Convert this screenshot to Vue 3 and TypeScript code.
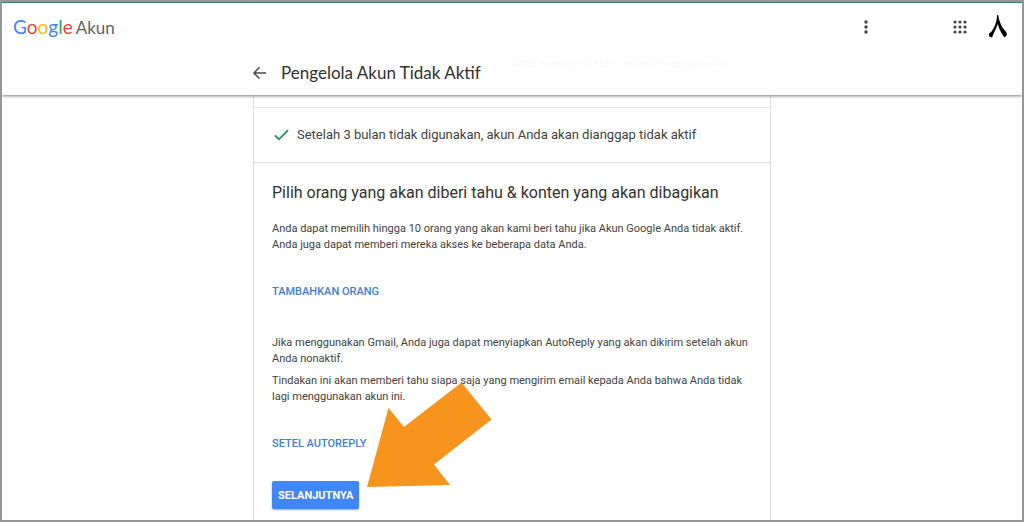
<script setup lang="ts">
interface Letter {
  char: string
  tone: string
}

const brand: Letter[] = [
  { char: 'G', tone: 'blue' },
  { char: 'o', tone: 'red' },
  { char: 'o', tone: 'yellow' },
  { char: 'g', tone: 'blue' },
  { char: 'l', tone: 'green' },
  { char: 'e', tone: 'red' },
]

const dots: number[] = [4, 9, 14]
</script>

<template>
  <div class="frame">
    <header class="header">
      <div class="topbar">
        <a href="#" class="logo" aria-label="Google Akun">
          <span class="google"><span v-for="(l, i) in brand" :key="i" :class="l.tone">{{ l.char }}</span></span>
          <span class="product">Akun</span>
        </a>
        <div class="tools">
          <button type="button" class="icon-button more" aria-label="Menu lainnya">
            <svg width="18" height="18" viewBox="0 0 18 18">
              <circle v-for="y in dots" :key="y" cx="9" :cy="y" r="1.7" />
            </svg>
          </button>
          <button type="button" class="icon-button apps" aria-label="Aplikasi Google">
            <svg width="18" height="18" viewBox="0 0 18 18">
              <template v-for="y in dots" :key="y">
                <circle v-for="x in dots" :key="x" :cx="x" :cy="y" r="1.6" />
              </template>
            </svg>
          </button>
          <button type="button" class="icon-button" aria-label="Profil">
            <svg class="avatar" width="20" height="26" viewBox="0 0 20 26">
              <path d="M9.2 1 L10.2 1 C10.8 6 12.8 11 15.2 14.6 C16.2 16.2 18.8 17.8 18.8 19.6 L18.6 21.8 L16.4 23.4 C14.6 20.6 11.2 16 9.7 10 C8.3 14.500 5.400 20 4 23.400 L1.200 22.600 L1 19.400 L3.400 17.800 C6.700 13.500 8.900 7.500 9.200 1 Z" />
            </svg>
          </button>
        </div>
      </div>
      <div class="titlebar">
        <button type="button" class="icon-button" aria-label="Kembali">
          <svg width="14" height="14" viewBox="0 0 14 14">
            <path class="stroke" d="M13 7 H1.500 M6.500 1.300 L1 7 L6.500 12.700" />
          </svg>
        </button>
        <h1>Pengelola Akun Tidak Aktif</h1>
      </div>
    </header>

    <main class="card">
      <section class="intro">
        <p>Anda meninggal atau berhenti menggunakan</p>
      </section>

      <section class="status">
        <svg width="15" height="12" viewBox="0 0 15 12">
          <path d="M1 6.4 L5 10.4 L14 1.2" />
        </svg>
        <p>Setelah 3 bulan tidak digunakan, akun Anda akan dianggap tidak aktif</p>
      </section>

      <section class="step">
        <h2>Pilih orang yang akan diberi tahu &amp; konten yang akan dibagikan</h2>
        <p>
          Anda dapat memilih hingga 10 orang yang akan kami beri tahu jika Akun Google Anda tidak aktif.
          Anda juga dapat memberi mereka akses ke beberapa data Anda.
        </p>
        <button type="button" class="text-button">TAMBAHKAN ORANG</button>
        <p>Jika menggunakan Gmail, Anda juga dapat menyiapkan AutoReply yang akan dikirim setelah akun Anda nonaktif.</p>
        <p class="follow">Tindakan ini akan memberi tahu siapa saja yang mengirim email kepada Anda bahwa Anda tidak lagi menggunakan akun ini.</p>
        <button type="button" class="text-button auto">SETEL AUTOREPLY</button>
        <div class="actions">
          <button type="button" class="primary">SELANJUTNYA</button>
          <svg class="pointer" width="126" height="107" viewBox="0 0 126 107">
            <path d="M0 105 L21.500 26 L37 45 L94.500 0.500 L124.500 37.500 L67 82.500 L83 103 Z" />
          </svg>
        </div>
      </section>
    </main>
  </div>
</template>

<style>
body {
  margin: 0;
  background: #fff;
}
</style>

<style scoped>
.frame {
  box-sizing: border-box;
  position: relative;
  height: 100vh;
  overflow: hidden;
  border: 2px solid #979797;
  background: #fff;
  color: #424242;
  font-family: Roboto, "Liberation Sans", sans-serif;
}
h1, h2, p {
  margin: 0;
  font-weight: 400;
}
button {
  border: 0;
  padding: 0;
  background: none;
  font-family: inherit;
  cursor: pointer;
}
.header {
  position: absolute;
  z-index: 1;
  top: 0;
  left: 0;
  right: 0;
  box-sizing: border-box;
  height: 93px;
  border-top: 1px solid #3d8078;
  background: rgba(255, 255, 255, 0.97);
  box-shadow: 0 1px 3px rgba(0, 0, 0, 0.5);
}
.topbar {
  display: flex;
  justify-content: space-between;
  align-items: center;
  height: 48px;
  padding: 0 14px 0 11px;
}
.logo {
  display: flex;
  align-items: baseline;
  gap: 3px;
  padding-bottom: 2px;
  color: #5f6368;
  font-family: Lato, sans-serif;
  font-size: 17px;
  text-decoration: none;
}
.google {
  font-size: 19px;
}
.blue { color: #4285f4; }
.red { color: #ea4335; }
.yellow { color: #fbbc05; }
.green { color: #34a853; }
.tools {
  display: flex;
  align-items: center;
}
.icon-button {
  display: flex;
  fill: #424242;
}
.more {
  margin-right: 76px;
}
.apps {
  margin-right: 19px;
}
.avatar {
  fill: #000;
}
.titlebar {
  display: flex;
  align-items: center;
  gap: 14px;
  width: 518px;
  height: 44px;
  margin: 0 auto;
}
.titlebar h1 {
  color: #303134;
  font-family: Lato, sans-serif;
  font-size: 17px;
  line-height: 24px;
}
.stroke {
  fill: none;
  stroke: #4a4a4a;
  stroke-width: 1.5;
}
.card {
  box-sizing: border-box;
  width: 518px;
  margin: 0 auto;
  border: 1px solid #e0e0e0;
  border-top: 0;
  font-size: 11px;
  line-height: 16px;
}
.intro {
  padding: 54px 40px 35px;
  text-align: right;
}
.status {
  display: flex;
  align-items: center;
  gap: 8px;
  height: 54px;
  padding: 0 20px;
  border: solid #e0e0e0;
  border-width: 1px 0;
  font-size: 13px;
}
.status path {
  fill: none;
  stroke: #1e8e5a;
  stroke-width: 1.7;
}
.step {
  padding: 18px 18px 24px;
}
h2 {
  margin-bottom: 16px;
  color: #333;
  font-size: 16px;
  line-height: 24px;
}
.text-button {
  display: block;
  margin: 31px 0 35px;
  color: #3f7fd6;
  font-size: 11px;
  font-weight: 500;
  line-height: 16px;
}
.follow {
  margin-top: 6px;
}
.auto {
  margin-bottom: 29px;
}
.actions {
  position: relative;
}
.primary {
  height: 28px;
  padding: 0 6px;
  border-radius: 2px;
  background: #4285f4;
  box-shadow: 0 1px 2px rgba(0, 0, 0, 0.35);
  color: #fff;
  font-size: 11px;
  font-weight: 700;
}
.pointer {
  position: absolute;
  left: 95px;
  bottom: 20px;
  fill: #f7941e;
}
</style>
